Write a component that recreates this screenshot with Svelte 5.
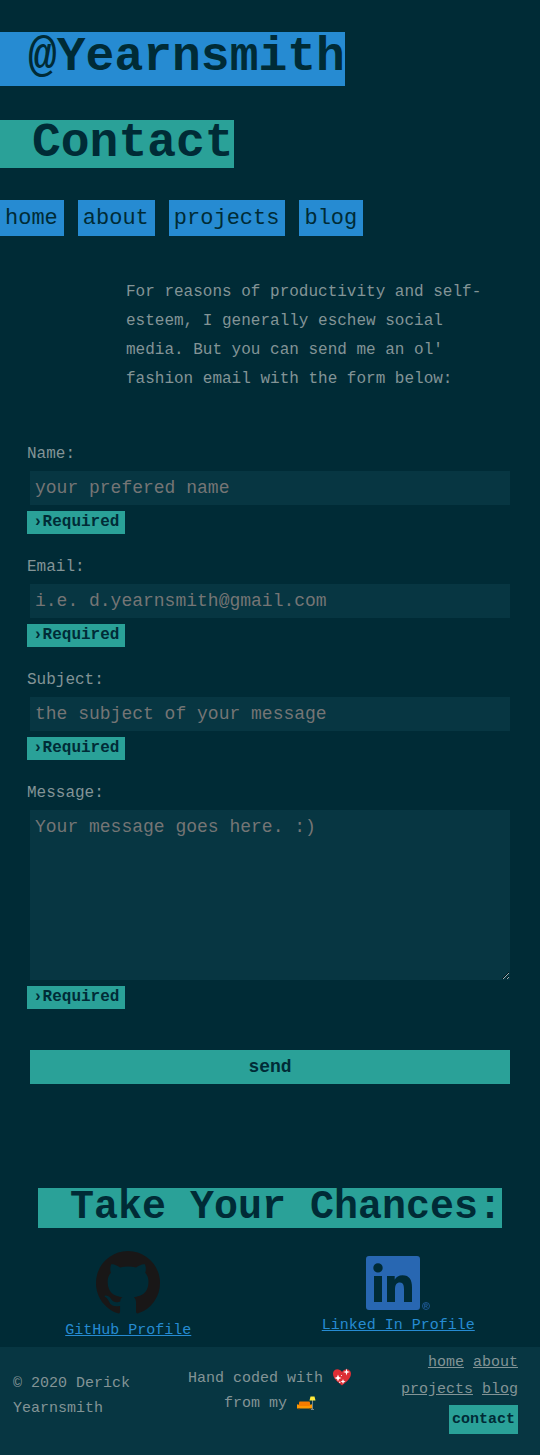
<script>
  const links = ['home', 'about', 'projects', 'blog'];
  const fields = [
    { id: 'name', label: 'Name:', type: 'text', hint: 'your prefered name' },
    { id: 'email', label: 'Email:', type: 'email', hint: 'i.e. d.yearnsmith@gmail.com' },
    { id: 'subject', label: 'Subject:', type: 'text', hint: 'the subject of your message' }
  ];
</script>

<div class="page">
  <header>
    <h1>@Yearnsmith</h1>
    <h2>Contact</h2>
    <nav class="main-nav" aria-label="Main">
      {#each links as link}
        <a href="#{link}">{link}</a>
      {/each}
    </nav>
  </header>

  <main>
    <p class="intro">For reasons of productivity and self-esteem, I generally eschew social media. But you can send me an ol' fashion email with the form below:</p>

    <form onsubmit={(e) => e.preventDefault()}>
      {#each fields as field}
        <div class="field">
          <label for={field.id}>{field.label}</label>
          <input id={field.id} type={field.type} placeholder={field.hint} />
          <span class="required">›Required</span>
        </div>
      {/each}
      <div class="field">
        <label for="message">Message:</label>
        <textarea id="message" placeholder="Your message goes here. :)"></textarea>
        <span class="required">›Required</span>
      </div>
      <button type="submit">send</button>
    </form>

    <section class="social">
      <h3>Take Your Chances:</h3>
      <div class="profiles">
        <a href="#github">
          <svg class="github" viewBox="0 0 16 16" aria-hidden="true">
            <path fill="#191717" d="M8 0C3.58 0 0 3.58 0 8c0 3.54 2.29 6.53 5.47 7.59.4.07.55-.17.55-.38 0-.19-.01-.82-.01-1.49-2.01.37-2.53-.49-2.69-.94-.09-.23-.48-.94-.82-1.13-.28-.15-.68-.52-.01-.53.63-.01 1.08.58 1.23.82.72 1.21 1.87.87 2.33.66.07-.52.28-.87.51-1.07-1.78-.2-3.64-.89-3.64-3.95 0-.87.31-1.59.82-2.15-.08-.2-.36-1.02.08-2.12 0 0 .67-.21 2.2.82.64-.18 1.32-.27 2-.27.68 0 1.36.09 2 .27 1.53-1.04 2.2-.82 2.2-.82.44 1.1.16 1.92.08 2.12.51.56.82 1.27.82 2.15 0 3.07-1.87 3.75-3.65 3.95.29.25.54.73.54 1.48 0 1.07-.01 1.93-.01 2.2 0 .21.15.46.55.38A8.013 8.013 0 0 0 16 8c0-4.42-3.58-8-8-8z" />
          </svg>
          <span>GitHub Profile</span>
        </a>
        <a href="#linkedin">
          <svg class="linkedin" viewBox="0 0 64 54" aria-hidden="true">
            <path fill="#2867b2" fill-rule="evenodd" d="M3 0H51Q54 0 54 3V51Q54 54 51 54H3Q0 54 0 51V3Q0 0 3 0ZM12 7.2A4.7 4.7 0 1 0 12 16.6A4.7 4.7 0 1 0 12 7.2ZM8 20V46H16V20ZM21 20V46H29V33.5C29 29 30.5 26.5 34 26.5C37.3 26.5 38 29.5 38 33.5V46H46V31.5C46 24 43.5 19.3 36.6 19.3C32.8 19.3 30.1 21.2 28.9 23.4H28.7V20Z" />
            <g fill="none" stroke="#2867b2" stroke-width="0.7">
              <circle cx="60" cy="50" r="3.5" />
              <path d="M58.7 52V48H60.2Q61.4 48 61.4 49.1T60.2 50.2H58.7M60.1 50.2L61.4 52" />
            </g>
          </svg>
          <span>Linked In Profile</span>
        </a>
      </div>
    </section>
  </main>

  <footer>
    <p class="copyright">© 2020 Derick Yearnsmith</p>
    <p class="made">
      Hand coded with
      <svg viewBox="0 0 20 18" role="img" aria-label="love">
        <path fill="#dd2e35" d="M10 17.5C5 13.5 1 10 1 5.5C1 .5 7.5-.5 10 4C12.5-.5 19 .5 19 5.5C19 10 15 13.5 10 17.5Z" />
        <g fill="#fff">
          <path d="M14.5.5L15.3 3.2L18 4L15.3 4.8L14.5 7.5L13.7 4.8L11 4L13.7 3.2Z" />
          <path d="M6 6.5L7 9L9.5 10L7 11L6 13.5L5 11L2.5 10L5 9Z" />
          <path d="M11 11L11.7 12.8L13.5 13.5L11.7 14.2L11 16L10.3 14.2L8.5 13.5L10.3 12.8Z" />
          <circle cx="7.8" cy="14.3" r="0.8" />
          <circle cx="9.5" cy="7.5" r="0.6" />
        </g>
      </svg>
      from my
      <svg viewBox="0 0 20 18" role="img" aria-label="couch">
        <path stroke="#75868b" stroke-width="1" d="M16.5 7V16.5M15 16.5H18" />
        <path fill="#ffeb3b" d="M14.5 3.5H18.5L19.5 7.5H13.5Z" />
        <path fill="#f57c00" d="M3 9.5Q3 8.5 4 8.5H13Q14 8.5 14 9.5V13H3Z" />
        <path fill="#ff9800" d="M1 12Q1 11 2.5 11.5L3.5 13H13.5L14.5 11.5Q16 11 16 12V15.5H1Z" />
        <path fill="#75450b" d="M2 15.5H4L3.5 16.5H2.5ZM13 15.5H15L14.5 16.5H13.5Z" />
      </svg>
    </p>
    <nav class="foot-nav" aria-label="Footer">
      {#each links as link}
        <a href="#{link}">{link}</a>{' '}
      {/each}
      <a class="current" href="#contact" aria-current="page">contact</a>
    </nav>
  </footer>
</div>

<style>
  :global(body) {
    margin: 0;
    background: #002b36;
  }

  .page {
    color: #839496;
    font-family: 'Liberation Mono', monospace;
    font-size: 16px;
  }

  header {
    display: flex;
    flex-direction: column;
    align-items: flex-start;
    padding-top: 32px;
  }

  h1,
  h2,
  h3,
  p {
    margin: 0;
  }

  h1,
  h2,
  h3 {
    color: #002b36;
    font-weight: bold;
  }

  h1 {
    padding: 0 0 4px 28px;
    margin-bottom: 34px;
    background: #268bd2;
    font-size: 48px;
    line-height: 50px;
  }

  h2 {
    padding: 0 0 2px 32px;
    margin-bottom: 32px;
    background: #2aa198;
    font-size: 48px;
    line-height: 46px;
  }

  .main-nav {
    display: flex;
    flex-wrap: wrap;
    gap: 14px;
  }

  .main-nav a {
    padding: 2px 6px 0 5px;
    background: #268bd2;
    color: #002b36;
    font-size: 22px;
    line-height: 34px;
    text-decoration: none;
  }

  .intro {
    margin: 42px 40px 48px 126px;
    line-height: 29px;
  }

  form {
    display: flex;
    flex-direction: column;
    padding: 0 30px 0 27px;
  }

  .field {
    display: flex;
    flex-direction: column;
    align-items: flex-start;
    margin-bottom: 21px;
  }

  label {
    margin-bottom: 5px;
    line-height: 24px;
  }

  input,
  textarea {
    box-sizing: border-box;
    align-self: stretch;
    height: 34px;
    margin: 0 0 6px 3px;
    padding: 0 5px;
    border: 0;
    border-radius: 0;
    background: #073642;
    color: #839496;
    font: 18px 'Liberation Mono', monospace;
  }

  textarea {
    height: 170px;
    padding-top: 7px;
    resize: both;
  }

  input::placeholder,
  textarea::placeholder {
    color: #757575;
  }

  .required {
    padding: 0 6px;
    background: #2aa198;
    color: #002b36;
    font-weight: bold;
    line-height: 23px;
  }

  button {
    height: 34px;
    margin: 20px 0 0 3px;
    padding: 0;
    border: 0;
    background: #2aa198;
    color: #002b36;
    font: bold 18px 'Liberation Mono', monospace;
  }

  .social {
    display: flex;
    flex-direction: column;
    align-items: center;
    padding-top: 104px;
  }

  h3 {
    padding: 0 0 0 32px;
    background: #2aa198;
    font-size: 40px;
    line-height: 40px;
  }

  .profiles {
    display: flex;
    justify-content: space-around;
    align-self: stretch;
    padding-top: 23px;
  }

  .profiles a {
    display: flex;
    flex-direction: column;
    align-items: center;
    color: #268bd2;
    font-size: 15px;
    line-height: 32px;
  }

  .github {
    width: 64px;
    height: 64px;
  }

  .linkedin {
    width: 64px;
    height: 54px;
    margin-top: 5px;
  }

  footer {
    display: grid;
    grid-template-columns: repeat(3, 1fr);
    padding: 2px 13px 21px;
    background: #073642;
    font-size: 15px;
    line-height: 25px;
  }

  .copyright {
    padding-top: 22px;
  }

  .made {
    padding-top: 17px;
    text-align: center;
  }

  .made svg {
    width: 20px;
    height: 18px;
    vertical-align: -4px;
  }

  .foot-nav {
    padding-right: 9px;
    line-height: 27px;
    text-align: right;
  }

  .foot-nav a {
    color: inherit;
  }

  .foot-nav .current {
    display: inline-block;
    margin-top: 2px;
    padding: 0 3px;
    background: #2aa198;
    color: #002b36;
    font-weight: bold;
    line-height: 29px;
    text-decoration: none;
  }
</style>
